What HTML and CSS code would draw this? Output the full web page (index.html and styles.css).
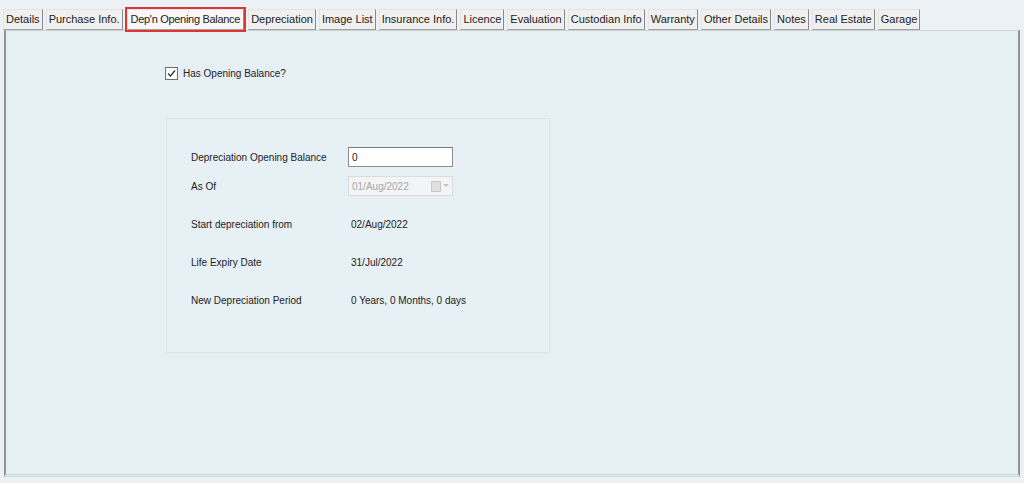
FILE: index.html
```html
<!DOCTYPE html>
<html lang="en">
<head>
  <meta charset="UTF-8">
  <title>Dep'n Opening Balance</title>
  <link rel="stylesheet" href="styles.css">
</head>
<body>
  <div class="window">
    <ul class="tabs">
      <li class="tab">Details</li>
      <li class="tab">Purchase Info.</li>
      <li class="tab active">Dep'n Opening Balance</li>
      <li class="tab">Depreciation</li>
      <li class="tab">Image List</li>
      <li class="tab">Insurance Info.</li>
      <li class="tab">Licence</li>
      <li class="tab">Evaluation</li>
      <li class="tab">Custodian Info</li>
      <li class="tab">Warranty</li>
      <li class="tab">Other Details</li>
      <li class="tab">Notes</li>
      <li class="tab">Real Estate</li>
      <li class="tab">Garage</li>
    </ul>

    <div class="panel">
      <label class="check-row">
        <span class="checkbox">
          <svg width="9" height="9" viewBox="0 0 9 9"><path d="M1 4.5 L3.5 7 L8 1.5" fill="none" stroke="#333" stroke-width="1.3"/></svg>
        </span>
        Has Opening Balance?
      </label>

      <div class="group">
        <div class="row">
          <span class="label">Depreciation Opening Balance</span>
          <span class="field">0</span>
        </div>
        <div class="row">
          <span class="label">As Of</span>
          <span class="field disabled">
            01/Aug/2022
            <span class="picker">
              <span class="cal"></span>
              <svg width="6" height="4" viewBox="0 0 6 4"><path d="M0 0 L6 0 L3 3 Z" fill="#c4c4c4"/></svg>
            </span>
          </span>
        </div>
        <div class="row row-tall">
          <span class="label">Start depreciation from</span>
          <span class="value">02/Aug/2022</span>
        </div>
        <div class="row row-tall">
          <span class="label">Life Expiry Date</span>
          <span class="value">31/Jul/2022</span>
        </div>
        <div class="row row-tall">
          <span class="label">New Depreciation Period</span>
          <span class="value">0 Years, 0 Months, 0 days</span>
        </div>
      </div>
    </div>
  </div>
</body>
</html>
```

FILE: styles.css
```css
body {
  margin: 0;
  padding: 0;
  background-color: #f0f0f0;
  font-family: Tahoma, 'Liberation Sans', sans-serif;
  font-size: 11px;
  color: #222;
}

.window {
  height: 483px;
  background: linear-gradient(#ebf1f4 0, #ebf1f4 478px, #f0f0f0 478px);
  padding-top: 9px;
  box-sizing: border-box;
}

.tabs {
  list-style-type: none;
  margin: 0 0 0 3px;
  padding: 0;
  display: flex;
  gap: 3px;
  height: 21px;
}

.tab {
  height: 19px;
  line-height: 19px;
  padding: 0 2px;
  background-color: #f0f0f0;
  border: 1px solid #e4e4e4;
  border-right-color: #8a8a8a;
  border-bottom-color: #a0a0a0;
  white-space: nowrap;
}

.tab.active {
  outline: 2px solid #e03535;
  outline-offset: 0;
  background-color: #f7f7f7;
  padding: 0 3px;
  margin: 0 1px;
  letter-spacing: -0.3px;
}

.panel {
  margin: 0 4px 0 4px;
  height: 447px;
  background-color: #e6eff3;
  border-left: 2px solid #8f9497;
  border-right: 2px solid #8f9497;
  border-top: 1px solid #c9d2d6;
  border-bottom: 3px double #c7d6da;
  box-sizing: border-box;
  padding: 36px 0 0 159px;
  font-size: 10px;
}

.check-row {
  display: flex;
  align-items: center;
  gap: 5px;
  height: 13px;
}

.checkbox {
  width: 11px;
  height: 11px;
  border: 1px solid #6f6f6f;
  background-color: #fff;
  display: flex;
  align-items: center;
  justify-content: center;
}

.group {
  margin: 38px 0 0 1px;
  width: 384px;
  height: 235px;
  border: 1px solid #d9e4e9;
  background-color: #e7f0f4;
  box-sizing: border-box;
  padding: 28px 0 0 24px;
}

.row {
  display: flex;
  align-items: center;
  height: 20px;
  margin-bottom: 9px;
}

.row-tall {
  margin-top: 18px;
}

.label {
  width: 157px;
  white-space: nowrap;
}

.field {
  width: 105px;
  height: 20px;
  box-sizing: border-box;
  border: 1px solid #8d8d8d;
  border-top-color: #7a7a7a;
  background-color: #fff;
  padding: 0 3px;
  display: flex;
  align-items: center;
}

.field.disabled {
  background-color: #f2f4f5;
  border-color: #d8dcde;
  color: #a8a8a8;
  justify-content: space-between;
}

.picker {
  display: flex;
  align-items: center;
  gap: 2px;
}

.cal {
  width: 8px;
  height: 9px;
  border: 1px solid #c8c8c8;
  background-color: #e0e0e0;
}

.value {
  padding-left: 3px;
}
```
